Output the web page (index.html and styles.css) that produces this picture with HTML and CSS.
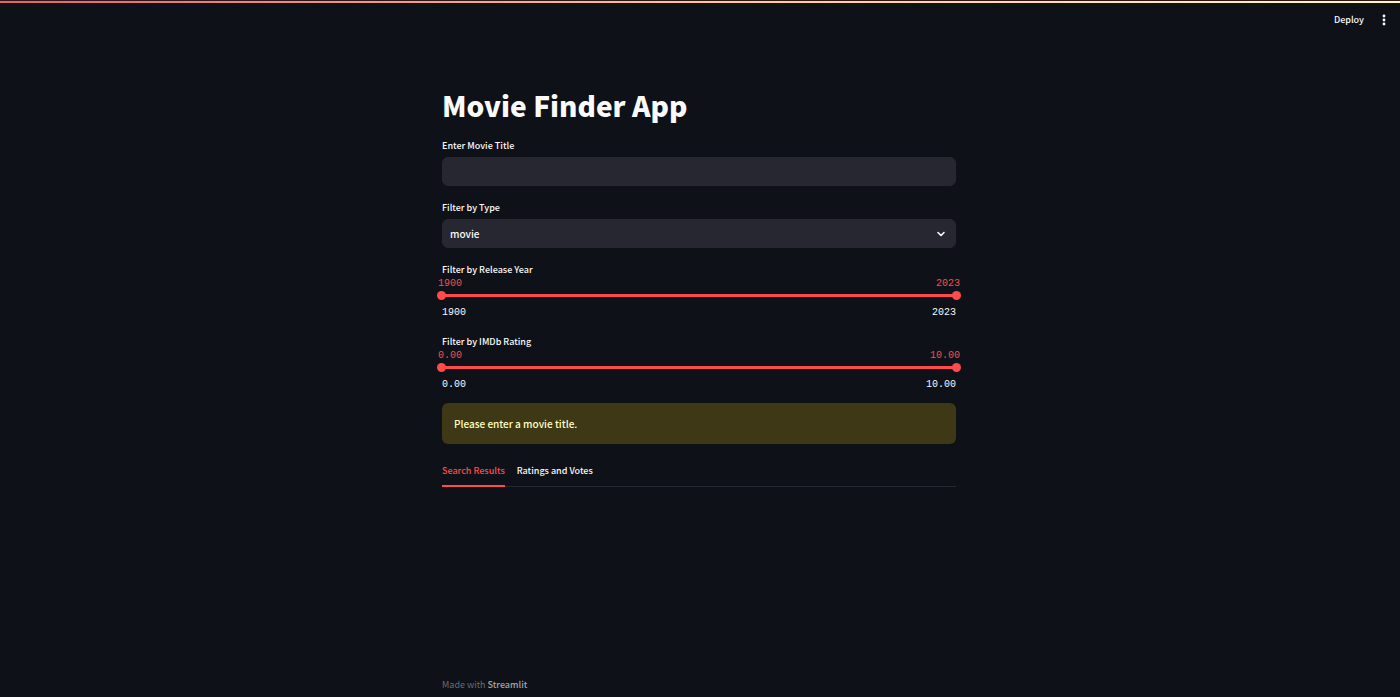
FILE: index.html
```html
<!DOCTYPE html>
<html lang="en">
<head>
<meta charset="utf-8">
<meta name="viewport" content="width=device-width, initial-scale=1">
<title>Movie Finder App</title>
<link rel="stylesheet" href="styles.css">
</head>
<body class="app">
<div class="decoration"></div>
<header class="toolbar">
  <button class="deploy" type="button">Deploy</button>
  <button class="menu" type="button" aria-label="Main menu">
    <svg width="4" height="12" viewBox="0 0 4 12" fill="currentColor"><circle cx="2" cy="2" r="1.4"/><circle cx="2" cy="6" r="1.4"/><circle cx="2" cy="10" r="1.4"/></svg>
  </button>
</header>
<main class="content">
  <h1 class="title">Movie Finder App</h1>
  <div class="fields">
    <div class="field">
      <label class="label" for="movie-title">Enter Movie Title</label>
      <input class="control" id="movie-title" type="text">
    </div>
    <div class="field">
      <label class="label" for="movie-type">Filter by Type</label>
      <div class="select-wrap">
        <select class="control" id="movie-type"><option>movie</option><option>series</option><option>episode</option></select>
        <svg class="chevron" width="10" height="10" viewBox="0 0 10 10" fill="none" stroke="currentColor" stroke-width="1.6" stroke-linecap="round" stroke-linejoin="round"><path d="M2 3.5 5 6.5 8 3.5"/></svg>
      </div>
    </div>
    <div class="slider" role="group" aria-labelledby="year-label">
      <label class="slider-label" id="year-label" for="year-from">Filter by Release Year</label>
      <div class="values"><output for="year-from">1900</output><output for="year-to">2023</output></div>
      <div class="track">
        <input class="range" id="year-from" type="range" min="1900" max="2023" value="1900">
        <input class="range" id="year-to" type="range" min="1900" max="2023" value="2023" aria-label="Latest release year">
      </div>
      <div class="limits"><span>1900</span><span>2023</span></div>
    </div>
    <div class="slider" role="group" aria-labelledby="rating-label">
      <label class="slider-label" id="rating-label" for="rating-from">Filter by IMDb Rating</label>
      <div class="values"><output for="rating-from">0.00</output><output for="rating-to">10.00</output></div>
      <div class="track">
        <input class="range" id="rating-from" type="range" min="0" max="10" step="0.01" value="0">
        <input class="range" id="rating-to" type="range" min="0" max="10" step="0.01" value="10" aria-label="Highest IMDb rating">
      </div>
      <div class="limits"><span>0.00</span><span>10.00</span></div>
    </div>
  </div>
  <div class="alert" role="alert">Please enter a movie title.</div>
  <div class="tabs" role="tablist">
    <button class="tab tab-active" type="button" role="tab" aria-selected="true">Search Results</button>
    <button class="tab" type="button" role="tab" aria-selected="false">Ratings and Votes</button>
  </div>
  <footer class="footer">Made with <a class="footer-link" href="https://streamlit.io">Streamlit</a></footer>
</main>
</body>
</html>
```
FILE: styles.css
```css
* { box-sizing: border-box; }

.app {
  margin: 0;
  min-height: 100vh;
  display: flex;
  flex-direction: column;
  background: #0e1117;
  color: #fafafa;
  font-family: "Noto Sans CJK SC", "Noto Sans", sans-serif;
  font-size: 9px;
  font-weight: 500;
  line-height: 16px;
}

button, input, select { font: inherit; color: inherit; }

.decoration {
  height: 3px;
  border-top: 1px solid #30161b;
  background: linear-gradient(90deg, #e06468, #ffc98c 50%, #fffdb0);
}

.toolbar {
  display: flex;
  align-items: center;
  justify-content: flex-end;
  gap: 18px;
  height: 33px;
  padding-right: 14px;
}

.deploy, .menu {
  padding: 0;
  border: 0;
  background: none;
}

.menu { display: flex; }

.content {
  flex: 1;
  display: flex;
  flex-direction: column;
  width: 100%;
  max-width: 548px;
  margin: 0 auto;
  padding: 50px 18px 4px 16px;
}

.title {
  margin: 0 0 14px;
  font-size: 28px;
  font-weight: 900;
  line-height: 38px;
}

.fields {
  display: flex;
  flex-direction: column;
  gap: 14px;
}

.field {
  display: flex;
  flex-direction: column;
  gap: 3px;
}

.slider-label {
  display: block;
  line-height: 15px;
}

.control {
  width: 100%;
  height: 29px;
  padding: 0 7px;
  border: 1px solid #262730;
  border-radius: 6px;
  outline: 0;
  background: #262730;
  font-size: 10px;
  appearance: none;
}

.select-wrap {
  display: grid;
  align-items: center;
}

.select-wrap > * { grid-area: 1 / 1; }

.chevron {
  justify-self: end;
  margin-right: 10px;
  pointer-events: none;
}

.values, .limits {
  display: flex;
  justify-content: space-between;
  font-family: "Liberation Mono", monospace;
  font-size: 10px;
  font-weight: 400;
  line-height: 13px;
}

.values {
  margin: 0 -4px;
  color: #ff4b4b;
}

.limits { margin: 6px 0 1px; }

.track {
  display: grid;
  align-items: center;
  height: 10px;
  margin: 0 -5px;
  background: linear-gradient(#ff4b4b, #ff4b4b) center / calc(100% - 10px) 3px no-repeat;
}

.range {
  grid-area: 1 / 1;
  width: 100%;
  height: 10px;
  margin: 0;
  background: none;
  appearance: none;
  pointer-events: none;
}

.range::-webkit-slider-thumb {
  width: 9px;
  height: 9px;
  border-radius: 50%;
  background: #ff4b4b;
  appearance: none;
  pointer-events: auto;
}

.alert {
  margin: 11px 0 13px;
  padding: 12px;
  border-radius: 6px;
  background: #3e3816;
  color: #ffffc2;
  font-size: 10px;
  line-height: 17px;
}

.tabs {
  display: flex;
  gap: 12px;
  padding-top: 6px;
  box-shadow: inset 0 -1px #262730;
}

.tab {
  padding: 0 0 6px;
  border: 0;
  border-bottom: 2px solid transparent;
  background: none;
}

.tab-active {
  border-color: #ff4b4b;
  color: #ff4b4b;
}

.footer {
  margin-top: auto;
  color: #6b6d73;
  font-weight: 400;
}

.footer-link {
  color: #a3a5a9;
  font-weight: 500;
  text-decoration: none;
}
```
